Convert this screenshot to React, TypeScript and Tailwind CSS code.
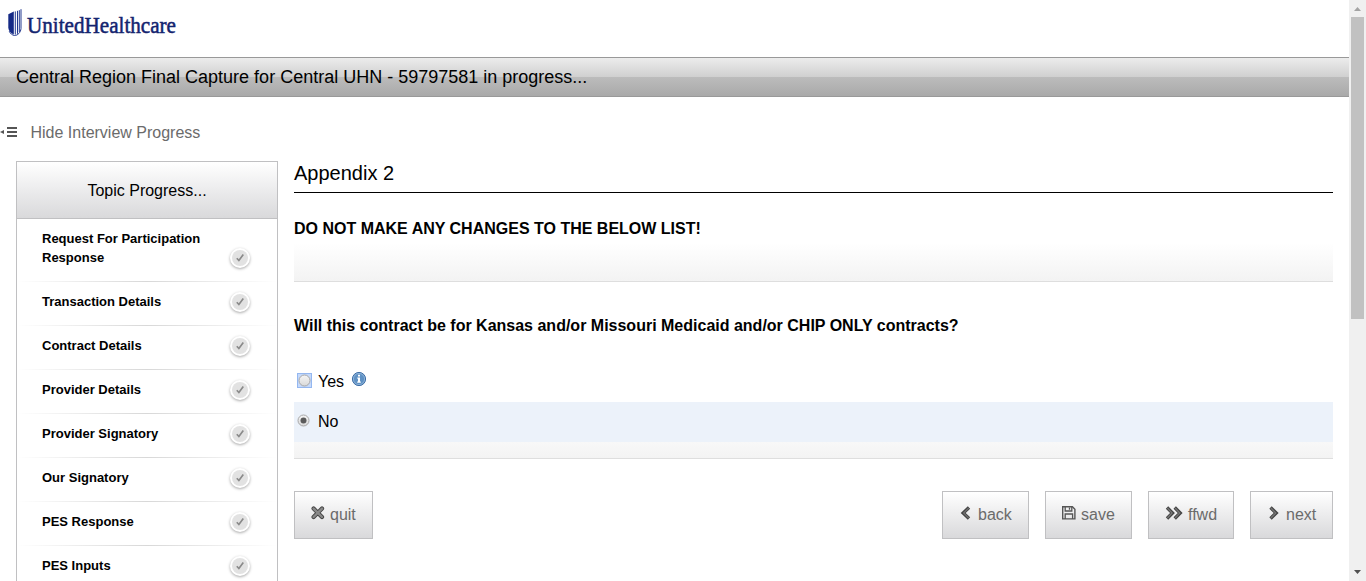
import type { ReactNode } from "react";

const topics = [
  "Request For Participation Response",
  "Transaction Details",
  "Contract Details",
  "Provider Details",
  "Provider Signatory",
  "Our Signatory",
  "PES Response",
  "PES Inputs",
];

function Logo() {
  return (
    <svg width="220" height="44" viewBox="0 0 220 44" role="img" aria-label="UnitedHealthcare">
      <path d="M8.3 14.2 13.8 11.6V34.6C10.2 32.8 8.4 30.5 8.3 27.5Z" fill="#152a86" />
      <path d="M15.3 11.4V34.6M17.5 10.8V33.8M19.3 10.2V32.2M21 9.2V28.5C20.7 32.6 17.6 35.6 14.5 35.5C12.3 35.2 10.2 33.6 9.2 31.2" fill="none" stroke="#22388f" strokeWidth="1" />
      <text x="27" y="32.7" fontSize="24" fill="#14246f" stroke="#14246f" strokeWidth="0.55" textLength="149" lengthAdjust="spacingAndGlyphs" fontFamily="Liberation Serif, serif">UnitedHealthcare</text>
    </svg>
  );
}

function CheckBadge() {
  return (
    <span className="flex h-5 w-5 shrink-0 items-center justify-center rounded-full bg-white shadow-[0_1px_3px_rgba(0,0,0,0.35)]">
      <svg width="16" height="16" viewBox="0 0 16 16">
        <circle cx="8" cy="8" r="8" fill="#e2e2e2" />
        <path d="M4.8 8.2 6.9 10.5 11.3 4.6" fill="none" stroke="#8a8a8a" strokeWidth="1.7" />
      </svg>
    </span>
  );
}

function Radio({ checked }: { checked?: boolean }) {
  return (
    <svg width="13" height="13" viewBox="0 0 13 13" className="shrink-0">
      <defs>
        <linearGradient id="radioFill" x1="0" y1="0" x2="0" y2="1">
          <stop offset="0" stopColor="#f5f5f5" />
          <stop offset="1" stopColor="#d9d9d9" />
        </linearGradient>
      </defs>
      <circle cx="6.5" cy="6.5" r="5.5" fill="url(#radioFill)" stroke="#a8a8a8" />
      {checked && <circle cx="6.5" cy="6.5" r="3" fill="#5b5b5b" />}
    </svg>
  );
}

function InfoIcon() {
  return (
    <svg width="16" height="16" viewBox="0 0 16 16" className="shrink-0">
      <circle cx="8" cy="8" r="6.6" fill="#5f91c4" stroke="#3f6ea6" strokeWidth="1" />
      <circle cx="8" cy="8" r="5.6" fill="none" stroke="#9fc0e0" strokeWidth="0.7" />
      <path d="M7 3.8H9V5.5H7ZM6.3 6.6H9V10.6H9.8V11.7H6.2V10.6H7V7.7H6.3Z" fill="#fff" />
    </svg>
  );
}

function ActionButton({ className, label, children }: { className: string; label: string; children: ReactNode }) {
  return (
    <button className={`flex h-12 items-center border border-[#c0c0c2] bg-linear-to-b from-white to-[#d9d9db] text-[16px] leading-[18px] text-[#6b6b6b] ${className}`}>
      {children}
      <span>{label}</span>
    </button>
  );
}

export default function App() {
  return (
    <div className="flex h-[581px] w-full overflow-hidden bg-white font-['Liberation_Sans',Arial,sans-serif] text-black">
      <div className="min-w-0 flex-1">
        <header className="h-[57px]">
          <Logo />
        </header>
        <div className="flex h-10 items-center border-y border-[#999] bg-[linear-gradient(to_bottom,#ececec_0,#d0d0d0_19px,#bcbcbc_19px,#a9a9a9_100%)] pl-4 text-[18px]">
          Central Region Final Capture for Central UHN - 59797581 in progress...
        </div>
        <div className="mt-[25px] flex h-5 items-center text-[16px] text-[#6b6b6b]">
          <svg width="18" height="14" viewBox="0 0 18 14" className="mr-[12.5px]">
            <path d="M0 7 4 5V9Z M7 2H17V4H7Z M7 6H17V8H7Z M7 10H17V12H7Z" fill="#555" />
          </svg>
          <span className="pt-0.5">Hide Interview Progress</span>
        </div>
        <div className="mt-[19px] flex gap-4 pr-4 pl-4">
          <aside className="h-[420px] w-[262px] shrink-0 overflow-hidden border border-b-0 border-[#c0c0c2]">
            <div className="flex h-[57px] items-center justify-center border-b border-[#c0c0c2] bg-linear-to-b from-white to-[#d9d9db] pt-0.5 text-[16px]">
              Topic Progress...
            </div>
            <ul>
              {topics.map((topic) => (
                <li key={topic}>
                  <div className="flex items-end justify-between pt-[10px] pr-[27px] pb-[13px] pl-[25px]">
                    <span className="w-[170px] pb-px text-[13px] leading-[19px] font-bold">{topic}</span>
                    <CheckBadge />
                  </div>
                  <div className="h-px bg-[linear-gradient(to_right,transparent,#d8d8d8_50%,transparent)]" />
                </li>
              ))}
            </ul>
          </aside>
          <main className="min-w-0 flex-1">
            <h1 className="h-8 border-b border-black pt-px text-[20px] leading-[23px]">Appendix 2</h1>
            <section className="mt-6 h-[65px] border-b border-[#dedede] bg-[linear-gradient(to_top,#f3f3f3,#fff_38px)] pt-px">
              <h2 className="text-[16px] leading-[22px] font-bold">DO NOT MAKE ANY CHANGES TO THE BELOW LIST!</h2>
            </section>
            <section className="mt-8 h-[145px] border-b border-[#dedede] bg-[linear-gradient(to_top,#f3f3f3,#fff_38px)] pt-px">
              <h2 className="text-[16px] leading-[22px] font-bold">Will this contract be for Kansas and/or Missouri Medicaid and/or CHIP ONLY contracts?</h2>
              <label className="mt-[25px] flex h-10 items-center text-[16px]">
                <span className="mr-1.5 mb-[3px] ml-[3px] flex h-[15px] w-[15px] items-center justify-center border border-[#94b7f0] bg-[#c5d9fa]">
                  <Radio />
                </span>
                <span className="leading-[18px]">Yes</span>
                <span className="mb-1.5 ml-[7px]"><InfoIcon /></span>
              </label>
              <label className="flex h-10 items-center bg-[#ecf2fa] text-[16px]">
                <span className="mr-2 mb-[3px] ml-[3px]"><Radio checked /></span>
                <span>No</span>
              </label>
            </section>
            <div className="mt-8 flex gap-4">
              <ActionButton className="mr-auto w-[79px] pl-[15px]" label="quit">
                <svg width="16" height="16" viewBox="0 0 16 16" className="mr-1 mb-1">
                  <path d="M3.6 3.6 12 12M12 3.6 3.6 12" stroke="#444" strokeWidth="4.2" strokeLinecap="round" />
                  <path d="M3.6 3.6 12 12M12 3.6 3.6 12" stroke="#888" strokeWidth="2.4" strokeLinecap="round" />
                </svg>
              </ActionButton>
              <ActionButton className="w-[87px] pl-[15px]" label="back">
                <svg width="16" height="16" viewBox="0 0 16 16" fill="none" className="mr-1 mb-1">
                  <path d="M11 2.5 5.2 8 11 13.5" stroke="#444" strokeWidth="3.4" />
                  <path d="M10.7 3 5.6 8 10.7 13" stroke="#707070" strokeWidth="1.2" />
                </svg>
              </ActionButton>
              <ActionButton className="w-[87px] pl-[15px]" label="save">
                <svg width="16" height="16" viewBox="0 0 16 16" fill="none" className="mr-1 mb-1">
                  <path d="M1.7 1.7H11.4L13.9 4.2V13.9H1.7Z" stroke="#555" strokeWidth="1.4" />
                  <path d="M4.2 1.5V6H10.8V1.5M4.2 14V9H11.6V14M8.5 2.5V4.7" stroke="#555" strokeWidth="1.3" />
                </svg>
              </ActionButton>
              <ActionButton className="w-[86px] pl-4" label="ffwd">
                <svg width="18" height="16" viewBox="0 0 18 16" fill="none" className="mr-[5px] mb-1">
                  <path d="M2 2.5 7.5 8 2 13.5M9.7 2.5 15.2 8 9.7 13.5" stroke="#444" strokeWidth="3.4" />
                  <path d="M2.4 3 7.1 8 2.4 13M10.1 3 14.8 8 10.1 13" stroke="#777" strokeWidth="1.2" />
                </svg>
              </ActionButton>
              <ActionButton className="w-[83px] pl-[15px]" label="next">
                <svg width="16" height="16" viewBox="0 0 16 16" fill="none" className="mr-1 mb-1">
                  <path d="M4.5 2.5 10.2 8 4.5 13.5" stroke="#444" strokeWidth="3.4" />
                  <path d="M4.9 3 9.8 8 4.9 13" stroke="#777" strokeWidth="1.2" />
                </svg>
              </ActionButton>
            </div>
          </main>
        </div>
      </div>
      <div className="flex w-[17px] shrink-0 flex-col items-center justify-between bg-[#f0f0f0]">
        <div>
          <svg width="17" height="17" viewBox="0 0 17 17"><path d="M8.5 7 12 11H5Z" fill="#a3a3a3" /></svg>
          <div className="mx-auto h-[302px] w-[13px] bg-[#c1c1c1]" />
        </div>
        <svg width="17" height="17" viewBox="0 0 17 17"><path d="M5 6H12L8.5 10Z" fill="#505050" /></svg>
      </div>
    </div>
  );
}
